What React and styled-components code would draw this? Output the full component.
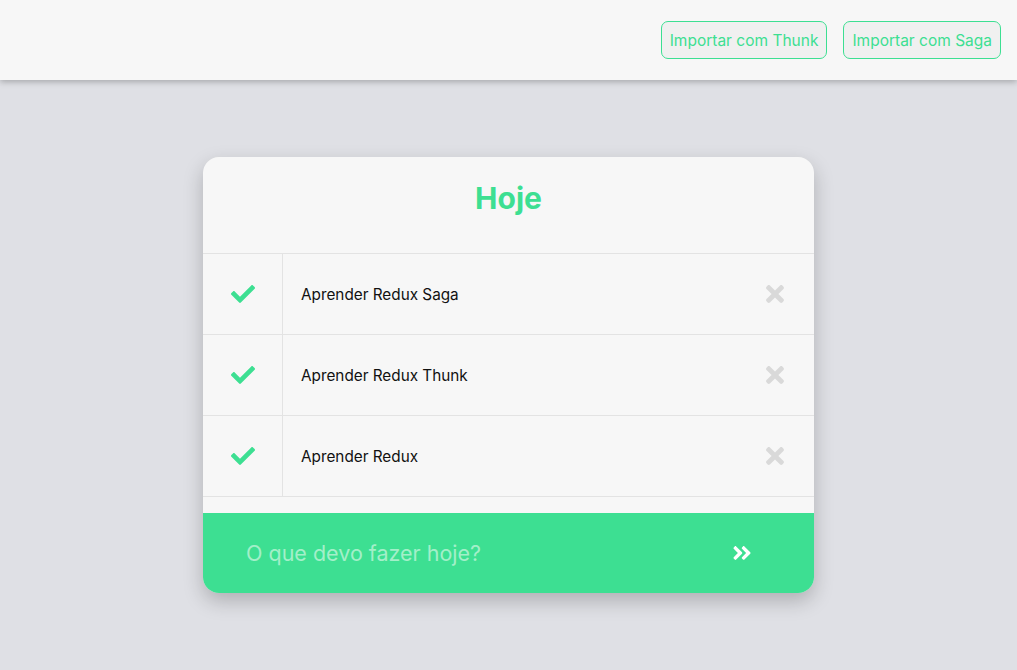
import styled, { createGlobalStyle } from 'styled-components';
import { FaCheck, FaTimes, FaAngleDoubleRight } from 'react-icons/fa';

const GlobalStyle = createGlobalStyle`
  * {
    box-sizing: border-box;
  }
  body {
    margin: 0;
    background-color: #dfe0e5;
    font-family: Inter, "Noto Sans", sans-serif;
  }
`;

const Page = styled.div`
  min-height: 100vh;
`;

const Header = styled.header`
  height: 80px;
  background-color: #f7f7f7;
  box-shadow: 0 2px 6px rgba(0, 0, 0, 0.25);
  display: flex;
  align-items: center;
  justify-content: flex-end;
  gap: 16px;
  padding-right: 16px;
`;

const ImportButton = styled.button`
  height: 38px;
  padding: 0 8px;
  font-family: Inter, sans-serif;
  font-size: 15.5px;
  color: #3ddf92;
  background-color: #f0f0f0;
  border: 1px solid #3ddf92;
  border-radius: 7px;
  cursor: pointer;
`;

const Card = styled.div`
  width: 611px;
  margin: 77px auto 0;
  background-color: #f7f7f7;
  border-radius: 16px;
  box-shadow: 0 8px 20px rgba(0, 0, 0, 0.22);
  overflow: hidden;
`;

const Title = styled.h1`
  margin: 0;
  height: 97px;
  padding-bottom: 14px;
  display: flex;
  align-items: center;
  justify-content: center;
  font-size: 30px;
  font-weight: 700;
  color: #3ddf92;
  border-bottom: 1px solid #e3e3e3;
`;

const List = styled.ul`
  list-style: none;
  margin: 0;
  padding: 0;
`;

const Item = styled.li`
  height: 81px;
  display: flex;
  align-items: center;
  border-bottom: 1px solid #e3e3e3;
`;

const CheckCell = styled.div`
  width: 80px;
  height: 100%;
  display: flex;
  align-items: center;
  justify-content: center;
  border-right: 1px solid #e3e3e3;
  color: ${(p) => (p.done ? '#3ddf92' : '#d9d9d9')};
  font-size: 24px;
`;

const Text = styled.span`
  flex: 1;
  padding-left: 18px;
  font-size: 15.3px;
  color: #111;
`;

const Remove = styled.button`
  border: none;
  background: transparent;
  padding: 0;
  margin-right: 26px;
  display: flex;
  color: #d9d9d9;
  font-size: 26px;
  cursor: pointer;
`;

const Footer = styled.form`
  margin-top: 16px;
  height: 80px;
  background-color: #3ddf92;
  display: flex;
  align-items: center;
  padding: 0 61px 0 41px;
`;

const Input = styled.input`
  flex: 1;
  border: none;
  outline: none;
  background: transparent;
  font-family: Inter, sans-serif;
  font-size: 21.5px;
  color: #fff;

  &::placeholder {
    color: #a3efc9;
  }
`;

const Submit = styled.button`
  border: none;
  background: transparent;
  padding: 0;
  display: flex;
  color: #fff;
  font-size: 22px;
  cursor: pointer;
`;

const todos = [
  { id: 1, text: 'Aprender Redux Saga', done: true },
  { id: 2, text: 'Aprender Redux Thunk', done: true },
  { id: 3, text: 'Aprender Redux', done: true },
];

const App = () => {
  return (
    <Page>
      <GlobalStyle />
      <Header>
        <ImportButton>Importar com Thunk</ImportButton>
        <ImportButton>Importar com Saga</ImportButton>
      </Header>
      <Card>
        <Title>Hoje</Title>
        <List>
          {todos.map((todo) => (
            <Item key={todo.id}>
              <CheckCell done={todo.done}>
                <FaCheck />
              </CheckCell>
              <Text>{todo.text}</Text>
              <Remove>
                <FaTimes />
              </Remove>
            </Item>
          ))}
        </List>
        <Footer onSubmit={(e) => e.preventDefault()}>
          <Input placeholder='O que devo fazer hoje?' />
          <Submit>
            <FaAngleDoubleRight />
          </Submit>
        </Footer>
      </Card>
    </Page>
  );
};

export default App;
